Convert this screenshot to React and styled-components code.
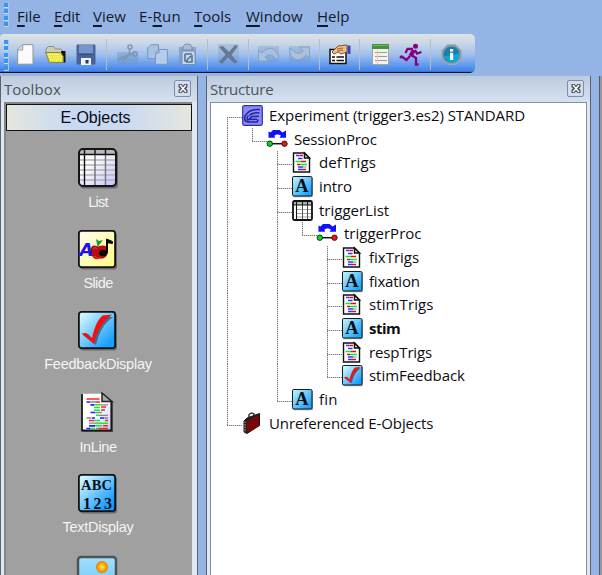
import React from "react";
import styled, { createGlobalStyle } from "styled-components";

const Global = createGlobalStyle`
  * { box-sizing: border-box; }
  html, body { margin: 0; padding: 0; overflow: hidden; }
  body { background: #94b4e6; font-family: "Open Sans", "Noto Sans", sans-serif; color: #111; }
  svg { display: block; flex: none; overflow: visible; }
`;

const Window = styled.div`
  width: 602px;
  height: 575px;
  display: flex;
  flex-direction: column;
  overflow: hidden;
  background: #94b4e6;
`;

const MenuBar = styled.nav`
  height: 34px;
  display: flex;
  align-items: flex-start;
  padding: 3px 0 0 4px;
`;

const Grip = styled.div`
  width: 5px;
  height: ${(p) => p.$h}px;
  margin-right: ${(p) => p.$gap}px;
  flex: none;
  background: repeating-linear-gradient(#3297fb 0 4px, #d5d9dc 4px 5px, transparent 5px 6.4px);
  border-right: 1px solid #b3c5e0;
`;

const MenuItem = styled.span`
  width: ${(p) => p.$w}px;
  flex: none;
  font-size: 15px;
  line-height: 26px;
  letter-spacing: ${(p) => p.$ls}px;
  white-space: nowrap;
  color: #15182a;
  u { text-underline-offset: 3px; text-decoration-thickness: 1.5px; text-decoration-skip-ink: none; }
`;

const ToolBar = styled.div`
  width: 475px;
  height: 39px;
  flex: none;
  display: flex;
  align-items: flex-start;
  padding: 6px 0 0 4px;
  border-radius: 4px 5px 5px 0;
  background: linear-gradient(#dfe3e3 0, #cbd8e6 22%, #a3c1ec 52%, #5c96ed 82%, #4287ef 92%, #4287ef 96%, #08121f 97%);
`;

const ToolButton = styled.div`
  width: 30.3px;
  height: 28px;
  flex: none;
  display: grid;
  place-items: center;
`;

const Separator = styled.div`
  width: 10.3px;
  height: 31px;
  margin-top: -1px;
  flex: none;
  display: grid;
  justify-items: center;
  &::after { content: ""; width: 1px; height: 100%; background: #b5bdc9; }
`;

const Workspace = styled.main`
  flex: 1;
  min-height: 0;
  margin-top: 3px;
  display: flex;
  gap: 8px;
`;

const Panel = styled.section`
  width: ${(p) => p.$w}px;
  flex: none;
  display: flex;
  flex-direction: column;
  border: solid #5d6169;
  border-width: 0 1px;
  padding: 0 ${(p) => p.$right}px 0 3px;
  background: #dfe7f3;
`;

const PanelTitle = styled.header`
  height: 26px;
  flex: none;
  margin: 0 ${(p) => -p.$right}px 0 -3px;
  padding: 0 6px 1px 3px;
  display: flex;
  align-items: center;
  justify-content: space-between;
  background: linear-gradient(#bdcbdd, #d5e1ef);
  font-size: 15px;
  letter-spacing: ${(p) => p.$ls}px;
  color: #4d535b;
`;

const CloseButton = styled.span`
  width: 17px;
  height: 17px;
  display: grid;
  place-items: center;
  border: 1px solid #7d8db1;
  border-radius: 2px;
  background: #d3deec;
`;

const Palette = styled.div`
  flex: 1;
  min-height: 0;
  border: solid #858585;
  border-width: 2px 0 0 2px;
  background: #a0a0a0;
  overflow: hidden;
`;

const PaletteHeader = styled.div`
  height: 27px;
  border: 1.5px solid #111;
  background: linear-gradient(90deg, #e5e7de, #c8d9f2 36%, #c8d9f2 62%, #e5e7de);
  font: 16px/25px "Liberation Sans", sans-serif;
  letter-spacing: -0.02px;
  padding-right: 7px;
  text-align: center;
  color: #0a0a14;
`;

const PaletteList = styled.div`
  display: flex;
  flex-direction: column;
  padding: 17px 4px 0 0;
`;

const PaletteItem = styled.div`
  height: 81.6px;
  flex: none;
  display: flex;
  flex-direction: column;
  align-items: center;
`;

const PaletteLabel = styled.span`
  margin: 5px 0 0 2px;
  font: 14.5px/20px "Liberation Sans", sans-serif;
  letter-spacing: ${(p) => p.$ls}px;
  color: #f4f4f4;
`;

const Tree = styled.div`
  flex: 1;
  min-height: 0;
  border: solid #848f9e;
  border-width: 1px 1px 0 1px;
  background: #fff;
  padding: 1px 0 0 6px;
`;

const Row = styled.div`
  height: ${(p) => p.$h}px;
  display: flex;
`;

const lineArea = { elbow: "1 / 2 / 2 / 3", start: "2 / 2 / 3 / 3" };

const Guide = styled.span`
  width: 25px;
  flex: none;
  display: grid;
  grid-template: 13px 1fr / 10px 1fr;
  &::before {
    content: "";
    width: 1px;
    grid-area: ${(p) => lineArea[p.$kind] ?? "1 / 2 / 3 / 3"};
    background: ${(p) => (p.$kind === "none" ? "none" : "repeating-linear-gradient(#7b7b7b 0 1px, #d4d4d4 1px 2px)")};
  }
  &::after {
    content: "";
    grid-area: 2 / 2 / 3 / 3;
    height: 1px;
    background: ${(p) => (p.$kind === "none" || p.$kind === "line" ? "none" : "repeating-linear-gradient(90deg, #7b7b7b 0 1px, #d4d4d4 1px 2px)")};
  }
`;

const RowIcon = styled.span`
  width: 27px;
  flex: none;
  padding-top: 1px;
`;

const RowLabel = styled.span`
  height: 22px;
  font-size: 15px;
  line-height: 22px;
  white-space: nowrap;
  font-weight: ${(p) => (p.$bold ? 700 : 400)};
  letter-spacing: ${(p) => p.$ls}px;
  color: #0d0d12;
`;

const EdgePanel = styled.div`
  flex: 1;
  border-left: 1px solid #55585c;
  background: #989898;
`;

/* ---------- object icons ---------- */

const Tile = ({ size, from, to, id, children }) => (
  <svg width={size} height={size} viewBox="0 0 38 38">
    <defs>
      <linearGradient id={id} x1="0" y1="0" x2="1" y2="1">
        <stop offset="0.1" stopColor={from} />
        <stop offset="0.85" stopColor={to} />
      </linearGradient>
    </defs>
    <rect x="2" y="2.4" width="37" height="37" rx="3" fill="#000" opacity="0.35" />
    <rect x="0.9" y="0.9" width="36.2" height="36.2" rx="2.5" fill={`url(#${id})`} stroke="#101316" strokeWidth="1.8" />
    {children}
  </svg>
);

const GridIcon = () => (
  <svg width="39" height="39" viewBox="0 0 39 39">
    <defs>
      <linearGradient id="gridFill" x1="0" y1="0" x2="1" y2="1">
        <stop offset="0.3" stopColor="#fff" />
        <stop offset="1" stopColor="#c3c3fb" />
      </linearGradient>
    </defs>
    <rect x="2" y="2.5" width="38" height="38" rx="4" fill="#000" opacity="0.35" />
    <rect x="1" y="1" width="37" height="37" rx="4" fill="url(#gridFill)" />
    <path d="M1 7V4q0-3 3-3h31q3 0 3 3v3z" fill="#b9b9b9" />
    <path d="M1 12h37M1 17h37M1 22h37M1 27h37M1 32h37" stroke="#b3b3b3" strokeWidth="1.3" />
    <path d="M17 7v31M27.500 7v31" stroke="#777" strokeWidth="1.500" />
    <path d="M1 6.500h37M6.500 1v37M17 1v6M27.500 1v6" stroke="#111" strokeWidth="1.400" />
    <rect x="1" y="1" width="37" height="37" rx="4" fill="none" stroke="#151515" strokeWidth="2" />
  </svg>
);

const SmallGrid = () => (
  <svg width="21" height="21" viewBox="0 0 21 21">
    <rect x="1" y="1" width="19" height="19" rx="2" fill="#fff" />
    <path d="M1 1h19v4H1z" fill="#b3b3b3" />
    <path d="M5 9.500h15M5 13.500h15M5 17h15" stroke="#a5a5a5" />
    <path d="M10.500 5v15M15.500 5v15" stroke="#555" />
    <path d="M1 5h19M4.500 1v19M10.500 1v4M15.500 1v4" stroke="#151515" strokeWidth="1.100" />
    <rect x="1" y="1" width="19" height="19" rx="1.500" fill="none" stroke="#101010" strokeWidth="1.800" />
  </svg>
);

const SlideIcon = () => (
  <Tile size={38} id="slideFill" from="#fffbe8" to="#fffb92">
    <path d="M20 16.500c-6-3-8 1-7 6 1 6 5 8 9 6 5 1 8-3 8-8 0-5-5-6-10-4z" fill="#b90c12" />
    <path d="M15 19c1-2 3-1 4 0M16 26c2 2 5 3 7 2" stroke="#ef463f" fill="none" />
    <path d="M19.500 17l-1.500-8 3 2 4-1-3 4z" fill="#159c32" />
    <text x="1.500" y="26" fontFamily="DejaVu Sans, sans-serif" fontWeight="700" fontStyle="italic" fontSize="18" fill="#1414ee">A</text>
    <ellipse cx="25" cy="23" rx="4" ry="3.200" fill="#080808" />
    <path d="M28.500 23V9l6 2.500v2l-5-.8V23z" fill="#080808" stroke="#080808" />
  </Tile>
);

const CheckIcon = ({ size = 38, id = "checkFill" }) => (
  <Tile size={size} id={id} from="#cff5ff" to="#179fff">
    <path d="M5 24l5-1 5 5c2-9 5-17 11-22l9 0c-10 7-14 16-17 28z" fill="#32536d" opacity="0.75" />
    <path d="M3.500 22.500l5-.6 5.500 5.600C16 18 19 9 24.500 4.500l9.500-.8C24 11 19 20 16 33z" fill="#f90d0d" />
  </Tile>
);

const ScriptIcon = () => (
  <svg width="33" height="39" viewBox="0 0 33 39">
    <defs>
      <linearGradient id="scriptFill" x1="0" y1="0" x2="1" y2="1">
        <stop offset="0.5" stopColor="#fff" /><stop offset="1" stopColor="#c9c8ff" />
      </linearGradient>
    </defs>
    <path d="M2 1h21l9 9v29H2z" fill="#333" opacity="0.55" />
    <path d="M1 .8h20.500v7.200h8v29.500H1z" fill="url(#scriptFill)" />
    <path d="M1 1v36.500h29.500V8" fill="none" stroke="#191919" strokeWidth="1.800" />
    <path d="M21 0l10 8.500H21z" fill="#aaa" stroke="#222" strokeWidth="1.500" />
    <path d="M5.500 6h13M15 9h4M20 14h5M20 17h4M24 27.500h3M8 27.500h5M22 32.800h5M18 35.500h9" stroke="#f22" strokeWidth="1.500" />
    <path d="M5.500 9h4M9.500 11.800h4M9.500 19.500h5M11 25h3M19 25h4M8 32.800h6M5.500 35.500h4" stroke="#22f" strokeWidth="1.700" />
    <path d="M14 11.800h5M13 14.500h6M13 17.300h6M15 22.300h3M13 27.500h6M18 30.200h9M14 32.800h7M10 35.500h4" stroke="#12f021" strokeWidth="1.500" />
    <path d="M10 9h5M19 11.800h8M15 19.500h6M18 22.300h9M5.500 25h5M23 25h4M8 30.200h10M15 35.500h3" stroke="#888" strokeWidth="1.300" />
  </svg>
);

const AbcIcon = () => (
  <Tile size={38} id="abcFill" from="#cff5ff" to="#149aff">
    <g fontFamily="Liberation Serif, serif" fontWeight="700" fill="#081018" textAnchor="middle">
      <text x="18.500" y="15.500" fontSize="14.500" textLength="31">ABC</text>
      <text x="19.500" y="34.500" fontSize="16" textLength="29">123</text>
    </g>
  </Tile>
);

const ImageIcon = () => (
  <svg width="40" height="40" viewBox="0 0 40 40">
    <defs>
      <linearGradient id="imgFill" x1="0" y1="0" x2="0" y2="1"><stop stopColor="#a5defc" /><stop offset="1" stopColor="#59c6f8" /></linearGradient>
      <radialGradient id="sunFill"><stop stopColor="#fff22b" /><stop offset="1" stopColor="#f27500" /></radialGradient>
    </defs>
    <rect x="1" y="1" width="38" height="38" rx="3" fill="url(#imgFill)" stroke="#4d5358" strokeWidth="2.500" />
    <circle cx="25" cy="11" r="6" fill="url(#sunFill)" />
  </svg>
);

const ExperimentIcon = () => (
  <svg width="21" height="21" viewBox="0 0 21 21">
    <rect x=".7" y=".7" width="19.600" height="19.600" rx="1.500" fill="#8a8bf7" stroke="#2c31a8" strokeWidth="1.200" />
    <path d="M18 4.500C12 4 8 5 5 8.500c-4 4-3 8.500 2 8.500h8l1.500-2.500M17.500 8c-5-.5-8 0-10 2.500M17 11.300l-7 .2-3 3 8-.3M6.500 10.500c-2 2-2 4 0 5" fill="none" stroke="#2026a3" strokeWidth="1.500" />
  </svg>
);

const ProcIcon = () => (
  <svg width="21" height="21" viewBox="0 0 21 21">
    <path d="M1.500 2.500l2 1L6 1h6.500l3 2.500L19 1.500V8.700h-6.500l1.500-2.200L11.500 5.500H9.500L7.500 6.500 8 8.700H1.500z" fill="#1110fa" />
    <path d="M4 14.700h14" stroke="#111" strokeWidth="1.500" />
    <circle cx="2.800" cy="14.700" r="2.700" fill="#0bd527" stroke="#103313" />
    <circle cx="17.500" cy="14.700" r="2.700" fill="#ef1116" stroke="#47161b" />
  </svg>
);

const SmallScript = () => (
  <svg width="20" height="21" viewBox="0 0 20 21">
    <path d="M1.500 1h11l5 5v14h-16z" fill="#fff" stroke="#101010" strokeWidth="1.400" />
    <path d="M12.500 1v5h5z" fill="#ddd" stroke="#111" strokeWidth="1.500" />
    <path d="M7.500 3.500h3.500M9 9.500h5M5 12.500h3M11 17.500h3" stroke="#f00" strokeWidth="1.300" />
    <path d="M4 3.500h3.500M6 6.500h4.500M6 15h5M6 17.500h5" stroke="#33f" strokeWidth="1.300" />
    <path d="M3.500 9.500h5.500M8 12.500h7" stroke="#0e2" strokeWidth="1.300" />
    <path d="M11 15h3.500" stroke="#999" strokeWidth="1.200" />
  </svg>
);

const TextIcon = ({ id }) => (
  <Tile size={20.500} id={id} from="#b3edff" to="#1fa5fb">
    <text x="18.500" y="30" fontFamily="Liberation Serif, serif" fontWeight="700" fontSize="34" textAnchor="middle" fill="#071014">A</text>
  </Tile>
);

const BagIcon = () => (
  <svg width="21" height="21" viewBox="0 0 21 21">
    <path d="M7 4V1.500L9.500 0 12 1v3" fill="none" stroke="#222" strokeWidth="1.300" />
    <path d="M2 8l3-3 12.500-4.500v12L5 20.500 2 19z" fill="#222" stroke="#161616" />
    <path d="M5 8.500L17 2v11L5 20z" fill="#7d0606" />
    <path d="M3 8.500v10.500" stroke="#aaa" strokeDasharray="1.500 1" />
  </svg>
);

/* ---------- toolbar icons ---------- */

const NewIcon = () => (
  <svg width="17" height="21" viewBox="0 0 17 21">
    <path d="M.7 5.500L5.500.7H16v19.500H.7z" fill="#fafafa" stroke="#8f9499" />
    <path d="M.7 6h5V.7" fill="#ddd" stroke="#999" />
  </svg>
);
const OpenIcon = () => (
  <svg width="22" height="19" viewBox="0 0 22 19">
    <path d="M1 8V4l2.500-2.500h5L10.500 4H16l2 2v3H1z" fill="#c9ccba" stroke="#8b8f80" />
    <path d="M16 6h4.500v11.500H17z" fill="#141414" />
    <path d="M.7 7.500h15l2.500 4v6H4.500z" fill="#ebe73a" stroke="#85835a" />
    <path d="M3 9.500h12M4 12h13M5 14.500h12" stroke="#fffdb0" strokeDasharray="1 1" />
  </svg>
);
const SaveIcon = () => (
  <svg width="20" height="21" viewBox="0 0 20 21">
    <rect x=".5" y=".5" width="19" height="20" rx="1" fill="#4a629c" />
    <rect x="3" y="1" width="14" height="9" fill="#7895ca" />
    <path d="M3 10h14" stroke="#253d72" />
    <rect x="5" y="14" width="10" height="7" fill="#f0f3f8" />
    <rect x="9.500" y="16" width="3" height="3.500" fill="#2d3855" />
  </svg>
);
const CutIcon = () => (
  <svg width="21" height="21" viewBox="0 0 21 21">
    <rect y="8" width="21" height="13" fill="#6f93c8" opacity=".4" />
    <g fill="none" stroke="#7f97b8" strokeWidth="1.600">
      <circle cx="13" cy="3" r="2" /><circle cx="18" cy="10" r="2.200" />
      <path d="M12.500 5v7M16 10l-5 1" /><path d="M11 11L1 15.500M11 12l-6 6" strokeWidth="2.400" />
    </g>
  </svg>
);
const CopyIcon = () => (
  <svg width="21" height="21" viewBox="0 0 21 21" fill="#a8c2e5" stroke="#7895bd">
    <path d="M.7 4L4 .7h7.500v14H.7z" />
    <path d="M8.500 9L12 5.500h8.300v14.800H8.500z" fill="#b5cdec" />
    <path d="M8.500 9H12V5.500" fill="none" />
  </svg>
);
const PasteIcon = () => (
  <svg width="20" height="21" viewBox="0 0 20 21">
    <path d="M1 3h17v17H1z" fill="#7897c0" opacity=".7" />
    <path d="M5 3c1-4 8-4 9 0v3H5z" fill="#a9bdd7" stroke="#758eb0" />
    <path d="M4 7h13v13.500H4z" fill="#c5d7ec" stroke="#7690b4" />
    <path d="M7 10h7M7 10v7h3M14 11v7H8M13 12l-4 4" fill="none" stroke="#587394" strokeWidth="1.600" />
  </svg>
);
const DeleteIcon = () => (
  <svg width="21" height="21" viewBox="0 0 21 21">
    <rect width="21" height="21" fill="#7896bf" opacity=".3" />
    <path d="M1 3l4-1 6 6 6-7 3 1-6.500 9 6 7-3 1.500-6.500-6L4 20l-3-2 6.500-7.500z" fill="#647996" />
  </svg>
);
const UndoIcon = ({ redo }) => (
  <svg width="21" height="16" viewBox="0 0 21 16">
    <g transform={redo ? "translate(21 16) rotate(180)" : undefined}>
      <rect width="21" height="16" fill="#7293c3" opacity=".3" />
      <path d="M.5 4v11h10L7 11c3-3 6-3 9 0l4.500 3C21 3 11-2 4 7z" fill="#a9c1de" stroke="#87a1c5" />
    </g>
  </svg>
);
const PropsIcon = () => (
  <svg width="22" height="21" viewBox="0 0 22 21">
    <rect x="1" y="5.500" width="16" height="14" fill="#fff" stroke="#111" strokeWidth="1.500" />
    <path d="M3 13h3M7.500 13H15M3 16.500h3M7.500 16.500H15" stroke="#111" strokeWidth="1.500" />
    <path d="M3 8L9 2l9-1v7l-6 2-3-2-4 2z" fill="#f1bd82" stroke="#7a542c" />
    <path d="M8 5l6-1M8 7l6-1" stroke="#976a35" />
    <path d="M18.500 1.500h3V10h-3z" fill="#3941c4" />
  </svg>
);
const ReportIcon = () => (
  <svg width="17" height="21" viewBox="0 0 17 21">
    <rect x=".5" y=".5" width="16" height="20" fill="#f3f3ee" stroke="#9aa7ae" />
    <rect width="17" height="5" fill="#43933b" /><path d="M1 1.500h15" stroke="#6fb75f" />
    <path d="M6 8.500h9M6 12.500h9M6 16.500h9" stroke="#9b9b9b" />
    <path d="M3 8.500h2M3 12.500h2M3 16.500h2" stroke="#d78383" /><path d="M5.500 6v14" stroke="#efb0b0" strokeWidth=".7" />
  </svg>
);
const RunIcon = () => (
  <svg width="22" height="21" viewBox="0 0 22 21" fill="none" stroke="#850080">
    <circle cx="15.500" cy="2.300" r="2.500" fill="#850080" stroke="none" />
    <path d="M14 6l-3.500 6" strokeWidth="4.200" />
    <path d="M13 5H7.500L5.500 9M15 6l2 3.500 4.500-1.500M11 11l5 3v6.500h2.500M10 12l-3.500 4-5-3.500L0 14" strokeWidth="2.300" />
  </svg>
);
const InfoIcon = () => (
  <svg width="21" height="21" viewBox="0 0 21 21">
    <path d="M6.500.7h8l5.800 5.800v8l-5.800 5.800h-8L.7 14.500v-8z" fill="#8c989f" stroke="#a6afb3" />
    <circle cx="10.500" cy="10.500" r="8" fill="#177fae" />
    <path d="M3 12c5 0 10-1 15-3 2 12-12 12-15 3z" fill="#08a6e4" />
    <path d="M9 5h3.200v2.500H9zM9 8.800h3.200V16H9z" fill="#fff" />
  </svg>
);
const CloseGlyph = () => (
  <svg width="10" height="9" viewBox="0 0 10 9">
    <path d="M.5 0h3.200L5 1.800 6.300 0h3.200v3L8 4.500 9.500 6v3H6.300L5 7.200 3.700 9H.5V6L2 4.500.5 3z" fill="#4f545d" />
    <path d="M2 1l6 7M8 1L2 8" stroke="#fff" strokeWidth="1.400" />
  </svg>
);

const menus = [
  ["", "F", "ile", 37, 0], ["", "E", "dit", 39, -0.1], ["", "V", "iew", 46, 0], ["E-", "R", "un", 55, 0.2],
  ["", "T", "ools", 52, 0], ["", "W", "indow", 71, 0], ["", "H", "elp", 40, 0],
];

const toolGroups = [
  [NewIcon, OpenIcon, SaveIcon], [CutIcon, CopyIcon, PasteIcon], [DeleteIcon],
  [UndoIcon, () => <UndoIcon redo />], [PropsIcon], [ReportIcon, RunIcon], [InfoIcon],
];

const palette = [
  ["List", <GridIcon />, -0.8], ["Slide", <SlideIcon />, -0.6], ["FeedbackDisplay", <CheckIcon />, -0.25],
  ["InLine", <ScriptIcon />, -0.4], ["TextDisplay", <AbcIcon />, -0.3], ["", <ImageIcon />, 0],
];

const tree = [
  ["Experiment (trigger3.es2) STANDARD", <ExperimentIcon />, "start", -0.05],
  ["SessionProc", <ProcIcon />, "line elbow", -0.15],
  ["defTrigs", <SmallScript />, "line none tee", 0.1],
  ["intro", <TextIcon id="t1" />, "line none tee", -0.1],
  ["triggerList", <SmallGrid />, "line none tee", 0],
  ["triggerProc", <ProcIcon />, "line none line elbow", 0],
  ["fixTrigs", <SmallScript />, "line none line none tee", 0],
  ["fixation", <TextIcon id="t2" />, "line none line none tee", -0.2],
  ["stimTrigs", <SmallScript />, "line none line none tee", 0.1],
  ["stim", <TextIcon id="t3" />, "line none line none tee", -0.5, true],
  ["respTrigs", <SmallScript />, "line none line none tee", -0.15],
  ["stimFeedback", <CheckIcon size={20.5} id="t4" />, "line none line none elbow", -0.05],
  ["fin", <TextIcon id="t5" />, "line none elbow", 0.2],
  ["Unreferenced E-Objects", <BagIcon />, "elbow", -0.1],
];
const rowTop = (i) => Math.round(i * 23.68);

export default function App() {
  return (
    <Window>
      <Global />
      <MenuBar>
        <Grip $h={24} $gap={8} />
        {menus.map(([pre, key, rest, w, ls]) => (
          <MenuItem key={rest} $w={w} $ls={ls}>{pre}<u>{key}</u>{rest}</MenuItem>
        ))}
      </MenuBar>
      <ToolBar>
        <Grip $h={31} $gap={1.7} />
        {toolGroups.map((group, i) => (
          <React.Fragment key={i}>
            {i > 0 && <Separator />}
            {group.map((Icon, j) => <ToolButton key={j}><Icon /></ToolButton>)}
          </React.Fragment>
        ))}
      </ToolBar>
      <Workspace>
        <Panel $w={198} $right={5}>
          <PanelTitle $right={5} $ls={0.1}>Toolbox<CloseButton><CloseGlyph /></CloseButton></PanelTitle>
          <Palette>
            <PaletteHeader>E-Objects</PaletteHeader>
            <PaletteList>
              {palette.map(([name, icon, ls]) => (
                <PaletteItem key={name}>{icon}<PaletteLabel $ls={ls}>{name}</PaletteLabel></PaletteItem>
              ))}
            </PaletteList>
          </Palette>
        </Panel>
        <Panel $w={385} $right={3}>
          <PanelTitle $right={3} $ls={-0.2}>Structure<CloseButton><CloseGlyph /></CloseButton></PanelTitle>
          <Tree>
            {tree.map(([name, icon, guides, ls, bold], i) => (
              <Row key={name} $h={rowTop(i + 1) - rowTop(i)}>
                {guides.split(" ").map((kind, j) => <Guide key={j} $kind={kind} />)}
                <RowIcon>{icon}</RowIcon>
                <RowLabel $ls={ls} $bold={bold}>{name}</RowLabel>
              </Row>
            ))}
          </Tree>
        </Panel>
        <EdgePanel />
      </Workspace>
    </Window>
  );
}
